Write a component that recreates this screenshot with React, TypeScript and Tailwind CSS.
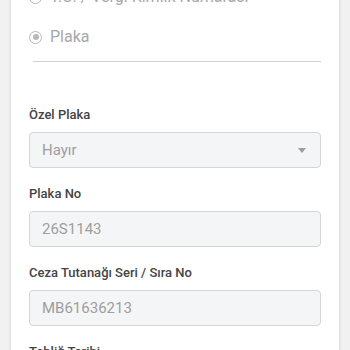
import React from 'react';

function Radio({ label, checked }: { label: string; checked?: boolean }) {
	return (
		<div className="flex items-center h-[40px] gap-[8px]">
			<span className="w-[13px] h-[13px] rounded-full border-[1.5px] border-[#b8b8b8] flex items-center justify-center">
				{checked && <span className="w-[6px] h-[6px] rounded-full bg-[#b8b8b8]" />}
			</span>
			<span className="text-[16px] text-[#a8a8a8]">{label}</span>
		</div>
	);
}

function Field({ label, value, select }: { label: string; value: string; select?: boolean }) {
	return (
		<div className="flex flex-col">
			<label className="text-[13px] leading-[16px] font-medium text-[#444] mb-[9px]">{label}</label>
			<div className="h-[36px] bg-[#f4f5f6] border border-[#d5d5d5] rounded-[4px] pl-[12px] pr-[14px] flex items-center justify-between">
				<span className="text-[15px] text-[#9e9e9e]">{value}</span>
				{select && (
					<span className="w-0 h-0 border-l-[4.5px] border-r-[4.5px] border-t-[5px] border-l-transparent border-r-transparent border-t-[#9d9d9d]" />
				)}
			</div>
		</div>
	);
}

export default function App() {
	return (
		<div
			className="h-[350px] overflow-hidden bg-[#f1f1f1] px-[11px]"
			style={{ fontFamily: 'Roboto, "Liberation Sans", sans-serif' }}
		>
			<div className="bg-white shadow-[0_0_4px_rgba(0,0,0,0.14)] -mt-[23px] px-[18px] pb-[40px] min-h-[420px]">
				<Radio label="T.C. / Vergi Kimlik Numarası" />
				<Radio label="Plaka" checked />
				<div className="ml-[4px] mt-[4px] h-px bg-[#cfcfcf]" />
				<div className="mt-[45px] flex flex-col gap-[18px]">
					<Field label="Özel Plaka" value="Hayır" select />
					<Field label="Plaka No" value="26S1143" />
					<Field label="Ceza Tutanağı Seri / Sıra No" value="MB61636213" />
					<Field label="Tebliğ Tarihi" value="" />
				</div>
			</div>
		</div>
	);
}
